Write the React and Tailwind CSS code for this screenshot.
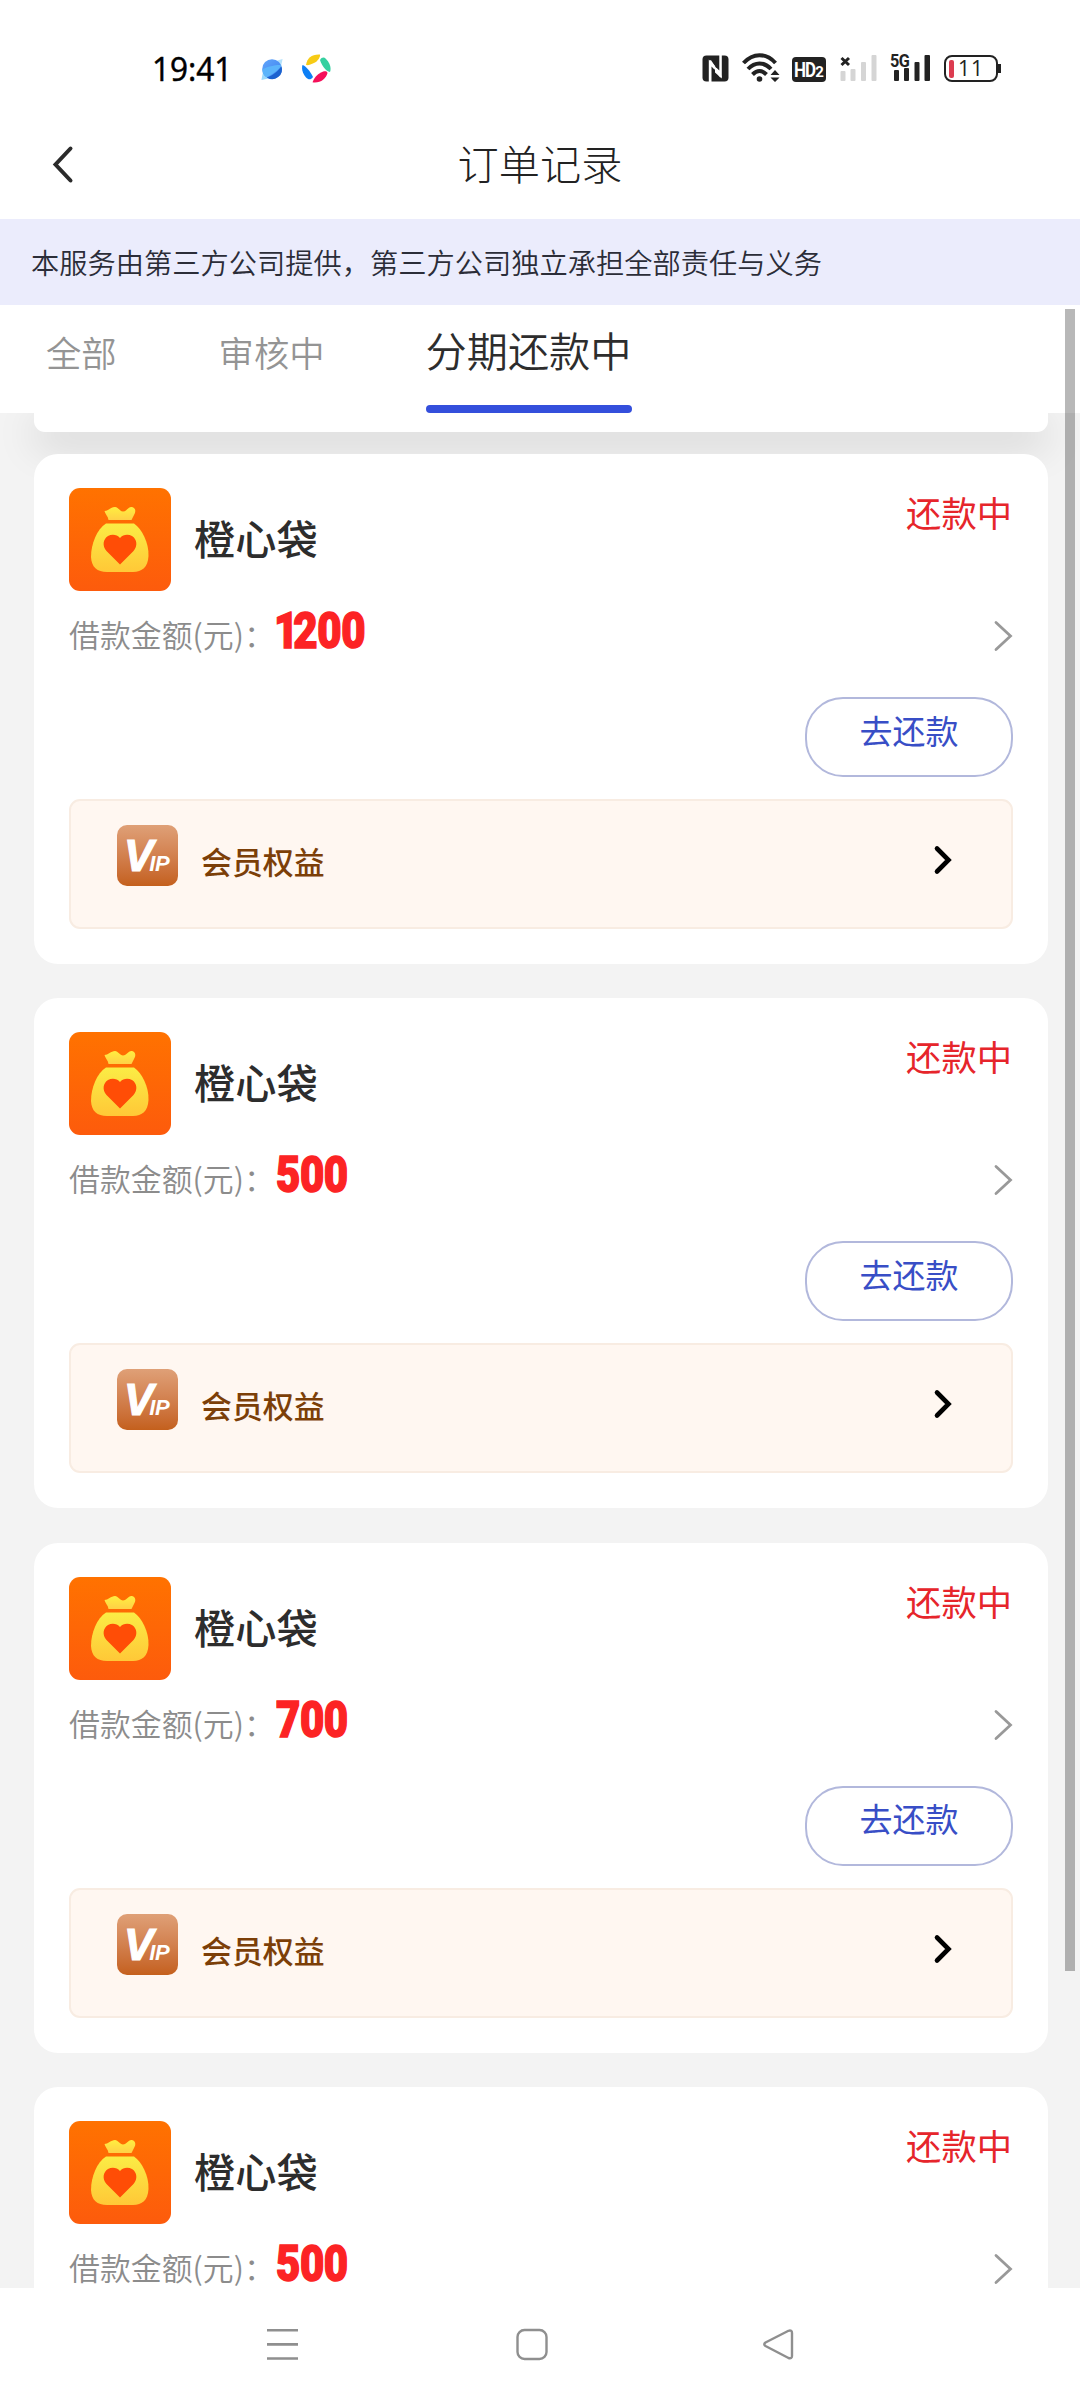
import React from 'react';

const orders = [
    { id: 1, name: '橙心袋', amount: '1200' },
    { id: 2, name: '橙心袋', amount: '500' },
    { id: 3, name: '橙心袋', amount: '700' },
    { id: 4, name: '橙心袋', amount: '500' },
];

const StatusBar = () => (
    <div className="h-[110px] flex items-start pt-[50px] pl-[152px] pr-[79px] shrink-0">
        <span className="origin-left scale-x-[0.97] font-['Open_Sans'] font-medium text-[32.500px] leading-[38px] w-[78px] text-black whitespace-nowrap [-webkit-text-stroke:0.5px_#000]">19:41</span>

        {/* Notification icons */}
        <svg className="ml-[30px] mt-[7px] shrink-0" width="25" height="25" viewBox="0 0 26 26">
            <defs>
                <linearGradient id="planet" x1="0" y1="0" x2="1" y2="1">
                    <stop offset="0" stopColor="#62a6fb" />
                    <stop offset="1" stopColor="#3a80ee" />
                </linearGradient>
            </defs>
            <path d="M1.500 24 L3 16 L10 22 Z" fill="#9bd8fb" />
            <path d="M17 4 L23.500 2 L22 9 Z" fill="#b4e2fc" />
            <circle cx="12.500" cy="12.500" r="10.200" fill="url(#planet)" />
            <path d="M22 8.500 C17 8 8 10 2.400 13 A10.200 10.200 0 0 0 6.500 21 C12 19 19 14 22.300 9 Z" fill="#5bb4fb" />
            <path d="M22.300 9.500 A10.200 10.200 0 0 1 7 21.300 C13 19.500 19 14.500 22.300 9.500 Z" fill="#1c62cf" />
        </svg>
        <svg className="ml-[17px] mt-[4px] shrink-0" width="29" height="29" viewBox="0 0 29 29">
            <path d="M4 11 C5 4 10 0 18 0.500 C18.500 3 16 7 12 9 C9 10.500 6 11.500 4 11 Z" fill="#f7cb15" />
            <path d="M18 6 C20 3 22 3 24 5 C28 9 29.500 14 28 18 C24 17.500 20 12 18 6 Z" fill="#35d0a0" />
            <path d="M0.500 11 C4 12 8 17 11 23 C9 26 6.500 26 4 23.500 C0 19 -0.500 14 0.500 11 Z" fill="#0d7ff5" />
            <path d="M25.500 19 C24 25 18 29.500 10.500 28.300 C12 24 15 20.500 19 18.500 C22 17 25 16.500 25.500 19 Z" fill="#f5105a" />
        </svg>

        {/* System icons */}
        <div className="ml-auto flex items-start text-[#222]">
            <svg className="mt-[5px]" width="27" height="27" viewBox="0 0 27 27">
                <rect x="0.500" y="0.500" width="26" height="26" rx="4" fill="currentColor" />
                <path d="M6.800 27 V4.500 L12.500 10.500 V14.500 L9.500 11.500 V27 Z" fill="#fff" />
                <path d="M17.300 0 V15.500 L14.500 12.800 L13 14.500 V17.500 L19.800 23.500 V0 Z" fill="#fff" />
                <path d="M8 5.500 L19 22" stroke="#fff" strokeWidth="2.200" />
            </svg>
            <svg className="ml-[13px] mt-[2px]" width="39" height="31" viewBox="0 0 39 31" fill="none" stroke="currentColor" strokeWidth="4">
                <path d="M1.500 11 C11 0.500 24 0.500 33.500 11" />
                <path d="M6 17 C13 9.500 22 9.500 29 17" />
                <path d="M10.500 22.500 C15 18 20 18 24.500 22.500" />
                <circle cx="17.500" cy="27" r="2.800" fill="currentColor" stroke="none" />
                <path d="M33 18 L37.500 23 H28.500 Z M33 30 L37.500 25.500 H28.500 Z" fill="currentColor" stroke="none" />
            </svg>
            <div className="ml-[11px] mt-[7px] w-[34px] h-[25px] rounded-[4px] bg-[#222] text-white flex items-center justify-center font-['Roboto'] font-bold leading-none">
                <span className="text-[20px] -tracking-[1px] scale-x-[0.85] -mx-[2px]">HD</span>
                <span className="text-[15px] mt-[6px]">2</span>
            </div>
            <svg className="ml-[14px] mt-[4px]" width="37" height="28" viewBox="0 0 37 28">
                <path d="M1.500 4 L9 11 M9 4 L1.500 11" stroke="currentColor" strokeWidth="3" />
                <rect x="0.500" y="17" width="5" height="10" rx="1" fill="#d5d5d5" />
                <rect x="10.500" y="15" width="5" height="12" rx="1" fill="#d5d5d5" />
                <rect x="21" y="8" width="5" height="19" rx="1" fill="#d5d5d5" />
                <rect x="31.500" y="1" width="5" height="26" rx="1" fill="#d5d5d5" />
            </svg>
            <div className="ml-[13px] mt-[2px] relative">
                <svg width="40" height="30" viewBox="0 0 40 30" fill="currentColor">
                    <rect x="4" y="18" width="5" height="11" rx="1" />
                    <rect x="14" y="16" width="5" height="13" rx="1" />
                    <rect x="24.500" y="10" width="5" height="19" rx="1" />
                    <rect x="34.500" y="3" width="5.500" height="26" rx="1" />
                </svg>
                <span className="absolute left-0 top-0 origin-left scale-x-90 font-['Roboto'] font-bold text-[18px] leading-[17px] -tracking-[0.5px]">5G</span>
            </div>
            <div className="ml-[14px] mt-[5px] flex items-center">
                <div className="w-[54px] h-[27px] border-2 border-[#222] rounded-[8px] flex items-center pl-[3px]">
                    <span className="w-[5px] h-[18px] rounded-[2px] bg-[#dc3c50]" />
                    <span className="ml-[4px] font-['Open_Sans'] text-[21px] leading-none tracking-[1px]">11</span>
                </div>
                <span className="w-[3px] h-[9px] bg-[#222]" />
            </div>
        </div>
    </div>
);

const BagLogo = () => (
    <svg className="shrink-0" width="102" height="103" viewBox="0 0 102 103">
        <defs>
            <linearGradient id="bagBg" x1="0" y1="0" x2="0" y2="1">
                <stop offset="0" stopColor="#ff7200" />
                <stop offset="1" stopColor="#fd5b0c" />
            </linearGradient>
            <linearGradient id="bagBody" x1="0" y1="0" x2="0" y2="1">
                <stop offset="0" stopColor="#fbec45" />
                <stop offset="1" stopColor="#ffc837" />
            </linearGradient>
            <linearGradient id="bagTop" x1="0" y1="0" x2="0" y2="1">
                <stop offset="0" stopColor="#ffee40" />
                <stop offset="1" stopColor="#ffd046" />
            </linearGradient>
        </defs>
        <rect width="102" height="103" rx="11" fill="url(#bagBg)" />
        <path d="M35.500 23 C39 23 42 19 46 19 C49 19 51 23.500 54 23.500 C58 23.500 59 18.500 63 19 C67 20 67 24 65 27 L62.500 32 H39.500 C39 28 36 26 35.500 23 Z" fill="url(#bagTop)" />
        <path d="M37 35.500 H65 C73 41 80 55 79.500 68 C79 79 73 84 64 84 H38 C28 84 22.500 79 22 69 C22 56 28 41 37 35.500 Z" fill="url(#bagBody)" />
        <path d="M51 76.500 L37.500 63 C33 58 34 51 39 48 C43 46 48 46.500 51 50 C54 46.500 59 46 63 48 C68 51 69 58 64.500 63 Z" fill="#ff4d06" />
    </svg>
);

const OrderCard = ({ order }) => (
    <div className="h-[510px] bg-white rounded-[24px] px-[35px] pt-[34px] relative shrink-0">
        {/* Product + status */}
        <div className="flex h-[103px]">
            <BagLogo />
            <h2 className="ml-[23px] mt-[22px] text-[41.2px] leading-[54px] font-medium text-[#2d2d2d]">{order.name}</h2>
            <span className="ml-auto mr-px mt-px text-[35.300px] leading-[46px] text-[#e6252b]">还款中</span>
        </div>

        {/* Loan amount */}
        <div className="flex items-start h-[106px]">
            <span className="mt-[22px] text-[30.9px] leading-[42px] font-[350] text-[#8c8c8c] whitespace-nowrap">借款金额(元)：</span>
            <span
                className={`mt-[10px] origin-left scale-x-[0.84] font-['Roboto'] font-black text-[50px] leading-[60px] -tracking-[0.500px] text-[#fc2324] [-webkit-text-stroke:1.5px_#fc2324] ${
                    order.amount.startsWith('1') ? '-ml-px first-letter:tracking-[-6px]' : 'ml-px'
                }`}
            >
                {order.amount}
            </span>
            <svg className="ml-auto mt-[29px] shrink-0" width="20" height="32" viewBox="0 0 20 32" fill="none" stroke="#999" strokeWidth="2.800" strokeLinecap="round">
                <path d="M3 2.500 L17.500 16 L3 29.500" />
            </svg>
        </div>

        <div className="flex justify-end">
            <button className="w-[208px] h-[80px] rounded-[38px] border-2 border-[#b2b8dc] text-[33px] leading-[44px] pb-[15px] text-[#384ec6]">去还款</button>
        </div>

        {/* Member benefits */}
        <div className="mt-[22px] h-[130px] rounded-[11px] border-2 border-[#f8ece2] bg-[#fff7f1] flex items-start pl-[46px] pr-[58px] pt-[24px]">
            <div className="w-[61px] h-[61px] rounded-[10px] bg-gradient-to-b from-[#dfa077] to-[#c4601c] text-white font-['Liberation_Sans'] font-bold italic flex items-baseline pl-[7px] leading-[61px]">
                <span className="text-[44px] -mr-[4px] [-webkit-text-stroke:1.2px_#fff]">V</span>
                <span className="text-[22px] leading-none -tracking-[0.5px]">IP</span>
            </div>
            <span className="ml-[23px] mt-[15px] text-[30.9px] leading-[42px] font-medium text-[#7c3f08]">会员权益</span>
            <svg className="ml-auto mt-[19px]" width="20" height="32" viewBox="0 0 20 32" fill="none" stroke="#000" strokeWidth="4.600" strokeLinecap="round">
                <path d="M4 4.500 L15.500 16 L4 27.500" />
            </svg>
        </div>
    </div>
);

const App = () => {
    return (
        <div className="w-[1080px] h-[2400px] bg-white flex flex-col overflow-hidden relative font-['Noto_Sans_CJK_SC',sans-serif] text-[#333]">
            <StatusBar />

            {/* Title bar */}
            <header className="h-[109px] grid grid-cols-[120px_1fr_120px] items-center shrink-0">
                <svg className="ml-[50px]" width="26" height="40" viewBox="0 0 26 40" fill="none" stroke="#2b2b2b" strokeWidth="4" strokeLinecap="round">
                    <path d="M20.500 3.500 L5.500 19.500 L20.500 35.500" />
                </svg>
                <h1 className="text-center pb-[5px] text-[41.2px] leading-[60px] font-light text-[#222]">订单记录</h1>
            </header>

            <p className="h-[86px] bg-[#ebecfc] pl-[31px] text-[28.25px] leading-[86px] font-[350] text-[#2b2d38] shrink-0">本服务由第三方公司提供，第三方公司独立承担全部责任与义务</p>

            {/* Tabs */}
            <nav className="h-[108px] bg-white flex items-start pl-[46px] shrink-0 z-10">
                <span className="mt-[22px] text-[35.300px] leading-[50px] text-[#949494] font-[350]">全部</span>
                <span className="ml-[102px] mt-[22px] text-[35.300px] leading-[50px] text-[#949494] font-[350]">审核中</span>
                <div className="ml-[101px] flex flex-col items-center">
                    <span className="mt-[14px] text-[41.2px] leading-[60px] font-[350] text-[#2d2d2d]">分期还款中</span>
                    <span className="mt-[26px] w-[206px] h-[8px] rounded-[4px] bg-[#344fdc]" />
                </div>
            </nav>

            {/* Order list */}
            <main className="flex-1 min-h-0 overflow-hidden bg-[#f3f3f3] px-[34px] pr-[32px]">
                <div className="h-[19px] bg-white rounded-b-[11px] shadow-[0_12px_40px_rgba(0,0,0,0.18)]" />
                <div className="mt-[22px] flex flex-col gap-[34.3px]">
                    {orders.map((order) => (
                        <OrderCard key={order.id} order={order} />
                    ))}
                </div>
            </main>

            {/* System navigation */}
            <footer className="h-[112px] bg-white flex items-start pt-[40px] shrink-0">
                <svg className="ml-[266px]" width="33" height="34" viewBox="0 0 33 34" stroke="#8f8f8f" strokeWidth="2.600">
                    <path d="M1 2.300 H32 M1 16.400 H32 M1 30.500 H32" />
                </svg>
                <svg className="ml-[217px]" width="32" height="34" viewBox="0 0 32 34" fill="none" stroke="#8f8f8f" strokeWidth="2.400">
                    <rect x="1.500" y="2" width="29" height="29" rx="7" />
                </svg>
                <svg className="ml-[214px]" width="34" height="34" viewBox="0 0 34 34" fill="none" stroke="#8f8f8f" strokeWidth="2.400" strokeLinejoin="round">
                    <path d="M3.500 14.500 L26.500 2.800 Q30 1.800 30 5 V28 Q30 31 26.500 30 L3.500 18 Q1 16.300 3.500 14.500 Z" />
                </svg>
            </footer>

            {/* Scroll thumb */}
            <div className="absolute z-20 left-[1065px] top-[309px] w-[10px] h-[1662px] bg-black/28" />
        </div>
    );
};

export default App;
